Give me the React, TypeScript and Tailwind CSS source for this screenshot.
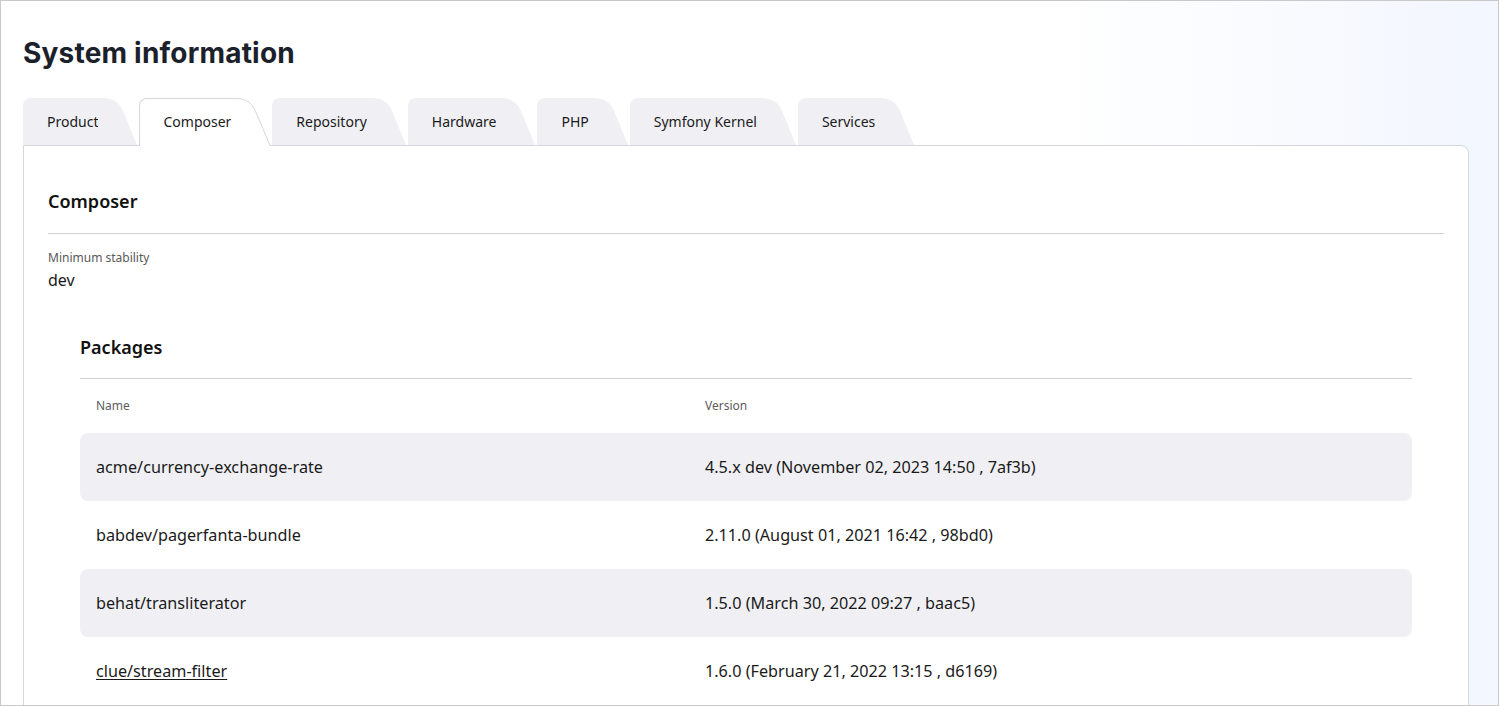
import React from "react";

const tabs = [
  "Product",
  "Composer",
  "Repository",
  "Hardware",
  "PHP",
  "Symfony Kernel",
  "Services",
];

const packages = [
  { name: "acme/currency-exchange-rate", version: "4.5.x dev (November 02, 2023 14:50 , 7af3b)" },
  { name: "babdev/pagerfanta-bundle", version: "2.11.0 (August 01, 2021 16:42 , 98bd0)" },
  { name: "behat/transliterator", version: "1.5.0 (March 30, 2022 09:27 , baac5)" },
  { name: "clue/stream-filter", version: "1.6.0 (February 21, 2022 13:15 , d6169)", link: true },
];

function Tab({ label, active }: { label: string; active?: boolean }) {
  return (
    <div className={`flex ${active ? "h-[48px] -mb-px" : "h-[47px]"}`}>
      <div
        className={`flex items-center rounded-tl-[8px] ${
          active ? "pl-[23px] pb-[2px] bg-white border-l border-t border-[#d6d6e0]" : "pl-6 bg-[#f0f0f4]"
        }`}
      >
        <span className="text-[14px] text-[#1a1a1a]">{label}</span>
      </div>
      <svg width="40" height={active ? 48 : 47} viewBox={`0 0 40 ${active ? 48 : 47}`} className="block">
        <path
          d="M0 0 H4 C15 0 21 4 25 13 L39 47 V48 H0 Z"
          fill={active ? "#ffffff" : "#f0f0f4"}
        />
        {active && (
          <path
            d="M0 0.5 H4 C15 0.5 20.5 4.5 24.5 13.2 L39 47.5"
            fill="none"
            stroke="#d6d6e0"
            strokeWidth="1"
          />
        )}
      </svg>
    </div>
  );
}

export default function App() {
  return (
    <div
      className="h-[706px] overflow-hidden border border-[#c9c9c9] bg-[linear-gradient(to_right,#ffffff_70%,#f2f6fe)] px-[22px] pt-[34px]"
      style={{ fontFamily: "'Noto Sans', 'Liberation Sans', sans-serif" }}
    >
      <h1
        className="text-[28px] leading-[36px] font-bold text-[#1b212b] tracking-[0.2px]"
        style={{ fontFamily: "Inter, 'Noto Sans', sans-serif" }}
      >
        System information
      </h1>

      <div className="mt-[27px] mr-[7px]">
        <div className="relative z-10 flex items-end gap-px">
          {tabs.map((t) => (
            <Tab key={t} label={t} active={t === "Composer"} />
          ))}
        </div>

        <div className="bg-white border border-[#d6d6e0] rounded-tr-[8px] px-6 pt-[41px] pb-10">
          <div className="border-b border-[#cfcfd4] pb-[18px]">
            <h2 className="text-[18px] leading-[28px] font-semibold text-[#111]">Composer</h2>
          </div>

          <div className="mt-4 text-[12px] leading-[16px] text-[#595959]">Minimum stability</div>
          <div className="mt-[2px] text-[16px] leading-[24px] text-[#1a1a1a]">dev</div>

          <div className="mt-[41px] px-8">
            <div className="border-b border-[#cfcfd4] pb-[17px]">
              <h3 className="text-[18px] leading-[28px] font-semibold text-[#111]">Packages</h3>
            </div>

            <div className="grid grid-cols-[609px_1fr] items-center h-[54px] px-4 text-[12px] text-[#5c5c5c]">
              <span>Name</span>
              <span>Version</span>
            </div>

            {packages.map((p, i) => (
              <div
                key={p.name}
                className={`grid grid-cols-[609px_1fr] items-center h-[68px] px-4 rounded-[8px] text-[16.2px] text-[#1a1a1a] ${
                  i % 2 === 0 ? "bg-[#f0f0f4]" : ""
                }`}
              >
                <span className={p.link ? "underline underline-offset-2" : ""}>{p.name}</span>
                <span>{p.version}</span>
              </div>
            ))}
          </div>
        </div>
      </div>
    </div>
  );
}
